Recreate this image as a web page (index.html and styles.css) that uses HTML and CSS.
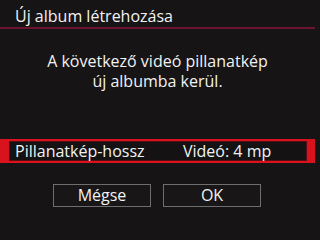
FILE: index.html
```html
<!DOCTYPE html>
<html lang="hu">
<head>
<meta charset="utf-8">
<link rel="stylesheet" href="styles.css">
</head>
<body>
<div class="screen">
  <div class="header">Új album létrehozása</div>
  <div class="message">
    <div class="line">A következő videó pillanatkép</div>
    <div class="line">új albumba kerül.</div>
  </div>
  <div class="row">
    <div class="row-inner">
      <span class="label">Pillanatkép-hossz</span>
      <span class="value">Videó: 4 mp</span>
    </div>
  </div>
  <div class="buttons">
    <div class="btn">Mégse</div>
    <div class="btn">OK</div>
  </div>
</div>
</body>
</html>
```
FILE: styles.css
```css
html, body {
  margin: 0;
  padding: 0;
  background: #161414;
}
.screen {
  width: 315px;
  height: 214px;
  background: #161414;
  color: #f2f2f2;
  font-family: "Open Sans", "Noto Sans", sans-serif;
  font-size: 16px;
  display: flex;
  flex-direction: column;
  overflow: hidden;
}
.header {
  height: 29px;
  line-height: 20px;
  padding: 6px 0 0 15px;
  box-sizing: border-box;
  border-bottom: 2px solid #6a1430;
}
.message {
  margin-top: 22px;
  text-align: center;
}
.line {
  height: 20px;
  line-height: 20px;
}
.row {
  margin-top: 48px;
  height: 24px;
  background: #d8131e;
  padding: 2px 8px 2px 9px;
  box-sizing: border-box;
  display: flex;
}
.row-inner {
  flex: 1;
  background: #141212;
  border: 1px solid #5a0e14;
  display: flex;
  align-items: center;
  padding-left: 5px;
  line-height: 18px;
}
.label {
  width: 168px;
}
.buttons {
  margin-top: 21px;
  display: flex;
  gap: 12px;
  padding-left: 53px;
}
.btn {
  width: 98px;
  height: 23px;
  box-sizing: border-box;
  border: 1px solid #6e6e6e;
  background: #181616;
  text-align: center;
  line-height: 21px;
}
```
